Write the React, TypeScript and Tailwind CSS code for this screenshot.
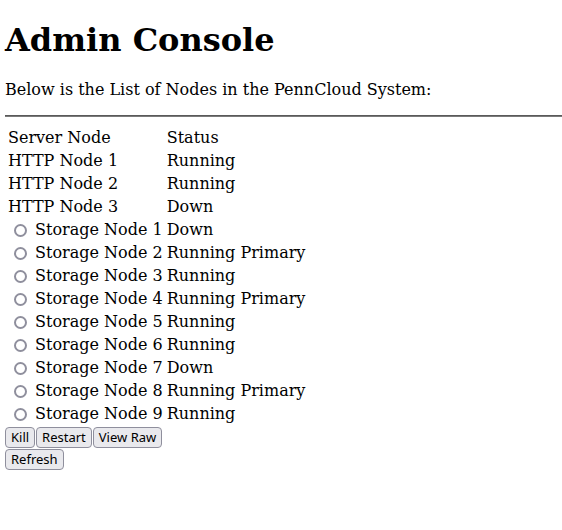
import React from 'react';

const httpNodes = [
  { name: 'HTTP Node 1', status: 'Running' },
  { name: 'HTTP Node 2', status: 'Running' },
  { name: 'HTTP Node 3', status: 'Down' },
];

const storageNodes = [
  { name: 'Storage Node 1', status: 'Down' },
  { name: 'Storage Node 2', status: 'Running Primary' },
  { name: 'Storage Node 3', status: 'Running' },
  { name: 'Storage Node 4', status: 'Running Primary' },
  { name: 'Storage Node 5', status: 'Running' },
  { name: 'Storage Node 6', status: 'Running' },
  { name: 'Storage Node 7', status: 'Down' },
  { name: 'Storage Node 8', status: 'Running Primary' },
  { name: 'Storage Node 9', status: 'Running' },
];

const Btn: React.FC<{ label: string }> = ({ label }) => (
  <button className="bg-[#e9e9ed] border border-[#8f8f9d] rounded-[4px] px-[5px] h-[21px] text-[13px] leading-none text-black font-['Noto_Sans',sans-serif] align-middle">
    {label}
  </button>
);

export default function App() {
  return (
    <div className="min-h-[530px] bg-white text-black pl-[5px] pt-[2px] font-['DejaVu_Serif',serif] text-[16px]">
      <h1 className="text-[32px] font-bold mt-[20px] mb-[21px] leading-[37px]">Admin Console</h1>
      <p className="leading-[19px] mb-[16px]">Below is the List of Nodes in the PennCloud System:</p>
      <div className="border-t border-b border-t-[#5a5a5a] border-b-[#7a7a7a] my-[8px]" />
      <table className="border-separate border-spacing-[2px]">
        <tbody>
          <tr>
            <td className="p-[1px] leading-[19px]">Server Node</td>
            <td className="p-[1px] leading-[19px]">Status</td>
          </tr>
          {httpNodes.map((n) => (
            <tr key={n.name}>
              <td className="p-[1px] leading-[19px]">{n.name}</td>
              <td className="p-[1px] leading-[19px]">{n.status}</td>
            </tr>
          ))}
          {storageNodes.map((n) => (
            <tr key={n.name}>
              <td className="p-[1px] leading-[19px] whitespace-nowrap">
                <span className="inline-block w-[13px] h-[13px] rounded-full border-2 border-[#8f8f9d] bg-white ml-[6px] mr-[3px] align-[-2px]" />
                {' '}
                {n.name}
              </td>
              <td className="p-[1px] leading-[19px] whitespace-nowrap">{n.status}</td>
            </tr>
          ))}
        </tbody>
      </table>
      <div className="flex gap-[1px] mt-[1px]">
        <Btn label="Kill" />
        <Btn label="Restart" />
        <Btn label="View Raw" />
      </div>
      <div className="flex mt-[1px]">
        <Btn label="Refresh" />
      </div>
    </div>
  );
}
